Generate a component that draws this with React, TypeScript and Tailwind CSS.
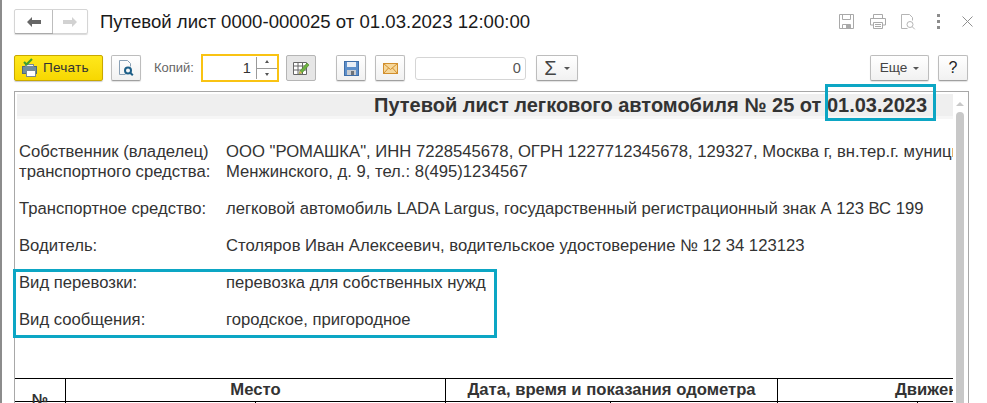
import React from "react";

const btn = "flex items-center justify-center rounded-[2px] border border-[#bdbdbd] border-b-[#a0a0a0] bg-gradient-to-b from-white to-[#f1f1f1] shadow-[0_1px_1px_rgba(0,0,0,0.12)]";

function Row({ label, value, className = "" }: { label: React.ReactNode; value: React.ReactNode; className?: string }) {
  return (
    <div className={`flex text-[16.67px] leading-[20px] text-[#333] ${className}`}>
      <div className="w-[211px] shrink-0 pl-[4px] whitespace-nowrap">{label}</div>
      <div className="whitespace-nowrap">{value}</div>
    </div>
  );
}

function Floppy({ gray }: { gray?: boolean }) {
  if (gray) {
    return (
      <svg width="15" height="15" viewBox="0 0 15 15" fill="none" stroke="#a9a9a9">
        <path d="M.5.5h14v14H.5z" />
        <path d="M3.500.5v5h8v-5M3.500 14.500v-4h8v4" />
        <rect x="7" y="11" width="4" height="3" fill="#a9a9a9" stroke="none" />
      </svg>
    );
  }
  return (
    <svg width="15" height="15" viewBox="0 0 15 15">
      <rect x=".5" y=".5" width="14" height="14" fill="#5d8fca" stroke="#3f6ea8" />
      <rect x="3" y="1" width="9" height="5" fill="#e9eef5" />
      <rect x="3" y="9" width="9" height="5" fill="#c9ccd0" />
      <rect x="7" y="10" width="3" height="4" fill="#6c7279" />
    </svg>
  );
}

function PreviewIcon({ gray }: { gray?: boolean }) {
  const c = gray ? "#b5b5b5" : "#8aa0b5";
  const m = gray ? "#b5b5b5" : "#1d5f88";
  return (
    <svg width="16" height="16" viewBox="0 0 16 16" fill="none">
      <path d="M1.500.5h8l3 3v3M1.500.5v14h6" stroke={c} />
      <circle cx="10" cy="10.500" r="3" stroke={m} strokeWidth={gray ? 1 : 2} />
      <path d="M12.200 12.700l2.600 2.600" stroke={m} strokeWidth={gray ? 1 : 2} />
    </svg>
  );
}

export default function App() {
  return (
    <div className="h-[403px] w-[987px] overflow-hidden bg-white font-['Liberation_Sans',Arial,sans-serif] relative border-l-2 border-[#8c8c8c]">
      {/* Заголовок */}
      <div className="flex items-center h-[25px] mt-[9px] ml-[12px] mr-[14px]">
        <div className="flex h-[25px] w-[74px] rounded-[2px] border border-[#d5d5d5] shadow-[0_1px_1px_rgba(0,0,0,0.15)]">
          <div className="w-[38px] flex items-center justify-center border-r border-[#bdbdbd] shadow-[0_1px_0_#aaa]">
            <svg width="14" height="10" viewBox="0 0 14 10"><path d="M0 5l5-5v3h9v4H5v3z" fill="#666" /></svg>
          </div>
          <div className="flex-1 flex items-center justify-center">
            <svg width="14" height="10" viewBox="0 0 14 10"><path d="M14 5L9 0v3H0v4h9v3z" fill="#d2d2d2" /></svg>
          </div>
        </div>
        <div className="ml-[12px] text-[18.6px] leading-[24px] text-[#1a1a1a] whitespace-nowrap">Путевой лист 0000-000025 от 01.03.2023 12:00:00</div>
        <div className="ml-auto flex items-center">
          <Floppy gray />
          <svg className="ml-[16px]" width="16" height="15" viewBox="0 0 16 15" fill="none" stroke="#a9a9a9">
            <path d="M3.500 4V.5h9V4M3.500 11H.5V4.500h15V11h-3" />
            <path d="M3.500 8.500h9v6h-9zM5 10.500h6M5 12.500h6" />
          </svg>
          <div className="ml-[14px]"><PreviewIcon gray /></div>
          <div className="ml-[21px] flex flex-col gap-[3px]">
            <div className="w-[3px] h-[3px] bg-[#8c8c8c]" />
            <div className="w-[3px] h-[3px] bg-[#8c8c8c]" />
            <div className="w-[3px] h-[3px] bg-[#8c8c8c]" />
          </div>
          <svg className="ml-[22px]" width="11" height="11" viewBox="0 0 11 11" stroke="#8f8f8f"><path d="M.5.5l10 10M10.500.5l-10 10" /></svg>
        </div>
      </div>

      {/* Панель */}
      <div className="flex items-center h-[28px] mt-[20px] ml-[12px] mr-[19px] text-[#333]">
        <div className="flex items-center h-[26px] w-[89px] rounded-[2px] border border-[#c9a800] bg-gradient-to-b from-[#ffe81a] to-[#f7d700] shadow-[0_1px_1px_rgba(0,0,0,0.2)] pl-[6px]">
          <svg width="18" height="20" viewBox="0 0 18 20">
            <rect x="1.500" y="8.500" width="14" height="7" fill="#6f8c9e" stroke="#4f6a7b" />
            <rect x="4.500" y="6.500" width="8" height="2" fill="#f2f2f2" stroke="#7a8a94" />
            <rect x="5.500" y="12.500" width="9" height="6" fill="#fff" stroke="#7a8a94" />
            <path d="M3 4l2.500 2.500L11 1" fill="none" stroke="#3f9f2f" strokeWidth="2.200" />
          </svg>
          <span className="ml-[4px] text-[13.6px] tracking-[0.2px]">Печать</span>
        </div>
        <div className={`${btn} ml-[8px] h-[26px] w-[30px]`}><PreviewIcon /></div>
        <span className="ml-[13px] text-[13px] text-[#666] w-[47px]">Копий:</span>
        <div className="flex items-center h-[28px] w-[78px] border-2 border-[#f9c313] bg-white">
          <span className="flex-1 text-right pr-[5px] text-[14.67px]">1</span>
          <div className="relative w-[21px] h-[22px] border-l border-[#9a9a9a] flex flex-col items-center justify-between py-[3px]">
            <div className="absolute left-0 right-0 top-1/2 border-t border-[#9a9a9a]" />
            <div className="w-0 h-0 border-x-[2px] border-x-transparent border-b-[3px] border-b-[#555]" />
            <div className="w-0 h-0 border-x-[2px] border-x-transparent border-t-[3px] border-t-[#555]" />
          </div>
        </div>
        <div className="ml-[7px] flex items-center justify-center h-[26px] w-[30px] rounded-[2px] border border-[#b5b5b5] bg-[#e6e6e6]">
          <svg width="18" height="16" viewBox="0 0 18 16">
            <path d="M1.500 2.500h13v12h-13zM1.500 6h13M1.500 10h13M6 2.500v12M10.500 2.500v12" fill="#fff" stroke="#666" />
            <path d="M7 14l1-3 7-8 2 2-7 8z" fill="#6cb33f" stroke="#4d7f2c" strokeWidth=".6" />
            <path d="M7 14l1-3 2 2z" fill="#e8b56a" />
          </svg>
        </div>
        <div className={`${btn} ml-[20px] h-[26px] w-[30px]`}><Floppy /></div>
        <div className={`${btn} ml-[9px] h-[26px] w-[30px]`}>
          <svg width="15" height="11" viewBox="0 0 15 11">
            <rect x=".5" y=".5" width="14" height="10" fill="#f6d79a" stroke="#d18f2e" />
            <path d="M.5.5l7 6 7-6M.5 10.500l5-5.500M14.500 10.500l-5-5.500" fill="none" stroke="#d18f2e" />
          </svg>
        </div>
        <div className="ml-[10px] h-[23px] w-[111px] rounded-[3px] border border-[#d5d5d5] text-right pr-[4px] text-[14.67px] leading-[21px] text-[#555]">0</div>
        <div className={`${btn} ml-[10px] h-[26px] w-[42px] gap-[7px]`}>
          <span className="text-[20px] leading-none text-[#444]">Σ</span>
          <div className="w-0 h-0 border-x-[3px] border-x-transparent border-t-[3px] border-t-[#555]" />
        </div>
        <div className={`${btn} ml-auto h-[26px] w-[59px] gap-[6px] text-[13.6px] text-[#444]`}>
          <span>Еще</span>
          <div className="w-0 h-0 border-x-[3px] border-x-transparent border-t-[3px] border-t-[#555]" />
        </div>
        <div className={`${btn} ml-[9px] h-[26px] w-[30px] text-[16px] text-[#222]`}>?</div>
      </div>

      {/* Документ */}
      <div className="flex mt-[9px] ml-[12px] mr-[18px] h-[312px] border border-b-0 border-[#a8a8a8] bg-white">
        <div className="w-[938px] overflow-hidden shrink-0">
          <div className="ml-[2px] mt-[2px] h-[25px] border-b-[3px] border-[#f6f6f6] bg-[#efefef] text-right pr-[26px] text-[20px] font-bold leading-[22px] text-[#333] whitespace-nowrap">
            Путевой лист легкового автомобиля № 25 от 01.03.2023
          </div>
          <div className="mt-[23px]">
            <Row label="Собственник (владелец)" value={'ООО "РОМАШКА", ИНН 7228545678, ОГРН 1227712345678, 129327, Москва г, вн.тер.г. муниципальный округ'} />
            <Row label="транспортного средства:" value="Менжинского, д. 9, тел.: 8(495)1234567" />
            <Row className="mt-[17px]" label="Транспортное средство:" value="легковой автомобиль LADA Largus, государственный регистрационный знак А 123 ВС 199" />
            <Row className="mt-[17px]" label="Водитель:" value="Столяров Иван Алексеевич, водительское удостоверение № 12 34 123123" />
            <Row className="mt-[17px]" label="Вид перевозки:" value="перевозка для собственных нужд" />
            <Row className="mt-[17px]" label="Вид сообщения:" value="городское, пригородное" />
          </div>
          <div className="mt-[48px] w-[938px] border-t border-black text-[16.67px] font-bold text-[#333]">
            <div className="flex h-[23px] leading-[22px] border-b border-black">
              <div className="w-[50px] shrink-0" />
              <div className="w-[380px] shrink-0 border-l border-black text-center">Место</div>
              <div className="w-[332px] shrink-0 border-l border-black text-center whitespace-nowrap">Дата, время и показания одометра</div>
              <div className="flex-1 border-l border-black pl-[117px] whitespace-nowrap">Движение</div>
            </div>
            <div className="flex h-[10px]">
              <div className="w-[50px] shrink-0 text-center leading-[16px] -mt-[11px] text-[14.67px]">№</div>
              <div className="w-[190px] shrink-0 border-l border-black" />
              <div className="w-[190px] shrink-0 border-l border-black" />
              <div className="w-[165px] shrink-0 border-l border-black" />
              <div className="w-[167px] shrink-0 border-l border-black" />
              <div className="w-[140px] shrink-0 border-l border-black" />
              <div className="flex-1 border-l border-black" />
            </div>
          </div>
        </div>
        <div className="flex flex-col items-center ml-[3px] w-[8px]">
          <div className="mt-[10px] w-0 h-0 border-x-[4px] border-x-transparent border-b-[4px] border-b-[#c8c8c8]" />
          <div className="mt-[6px] flex-1 w-[8px] rounded-t-[4px] bg-[#c8c8c8]" />
        </div>
      </div>

      {/* Выделения */}
      <div className="absolute left-[823px] top-[84px] w-[111px] h-[37px] border-[3px] border-[#0ca6c4]" />
      <div className="absolute left-[11px] top-[269px] w-[484px] h-[69px] border-[3px] border-[#0ca6c4]" />
    </div>
  );
}
